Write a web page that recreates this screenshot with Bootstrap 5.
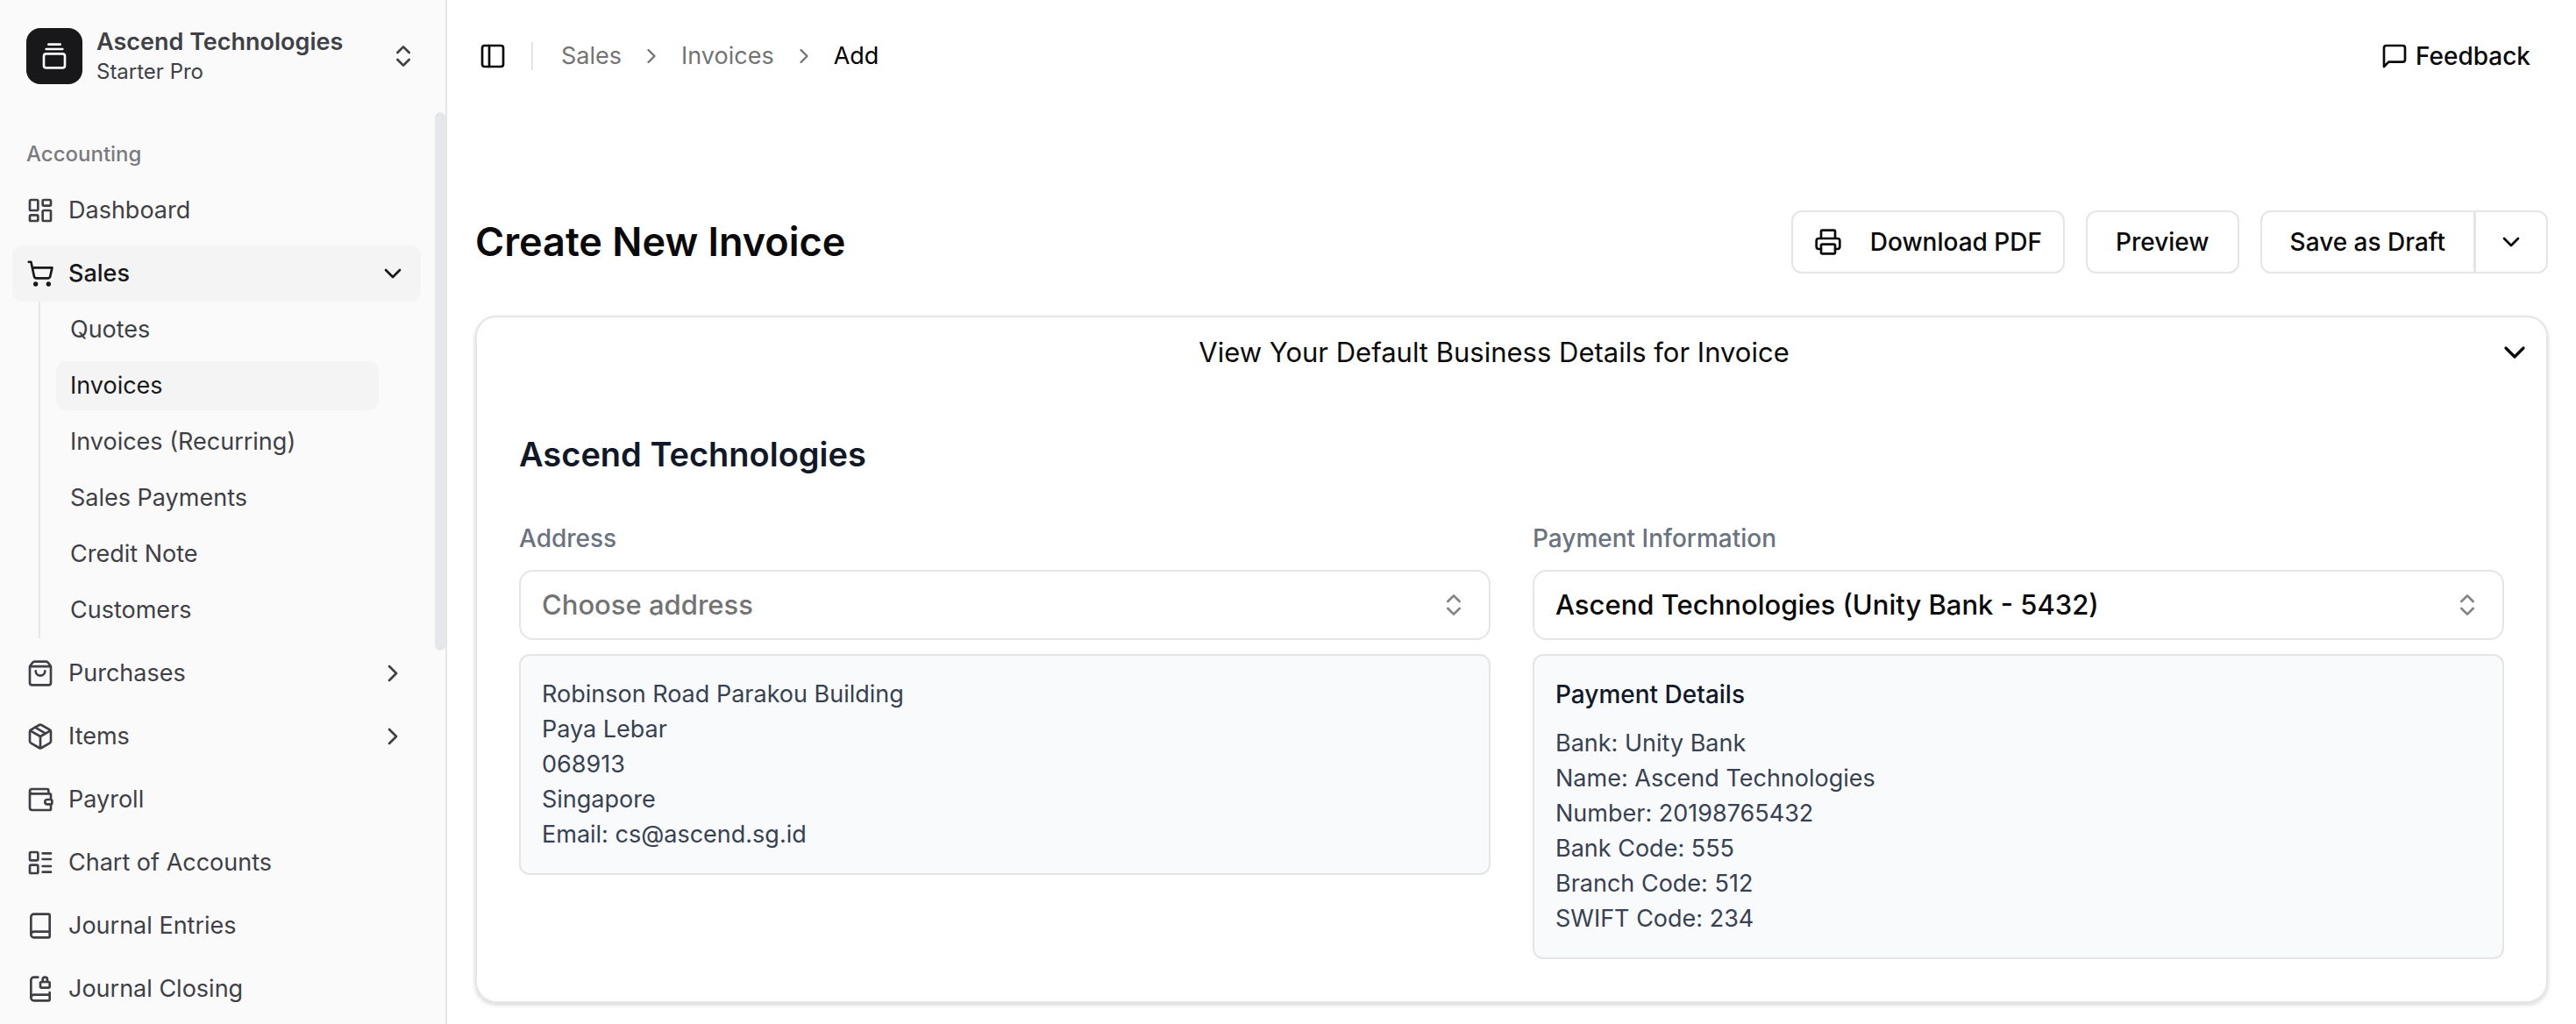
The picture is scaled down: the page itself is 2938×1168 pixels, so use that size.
<!DOCTYPE html>
<html lang="en">
<head>
<meta charset="utf-8">
<meta name="viewport" content="width=device-width, initial-scale=1">
<title>Create New Invoice</title>
<link href="https://cdn.jsdelivr.net/npm/bootstrap@5.3.0/dist/css/bootstrap.min.css" rel="stylesheet">
<style>
  :root { --line: #e5e5e5; --ink: #0a0a0a; --muted: #737373; --side-ink: #3f3f46; }
  body { font-family: Inter, "Liberation Sans", sans-serif; font-size: 27px; line-height: 40px; color: var(--ink); background: #fff; }
  a { color: inherit; text-decoration: none; }
  .ico { width: 32px; height: 32px; flex: none; fill: none; stroke: currentColor; stroke-width: 2; stroke-linecap: round; stroke-linejoin: round; }
  .ico-sm { width: 28px; height: 28px; }
  .ico-lg { width: 40px; height: 40px; }
  .gap-16 { gap: 16px; }

  .side { width: 510px; flex: none; background: #fafafa; color: var(--side-ink); border-right: 2px solid #e5e5e8; overflow: hidden; }
  .brand { height: 128px; flex: none; padding: 0 32px 0 30px; border: 0; background: none; color: inherit; text-align: left; }
  .brand-logo { width: 64px; height: 64px; border-radius: 16px; background: #18181b; color: #fafafa; }
  .brand-name { line-height: 36px; }
  .brand-plan { font-size: 24px; line-height: 32px; }
  .side-menu { padding: 16px 16px 0 14px; min-width: 0; overflow: hidden; }
  .side-label { height: 64px; padding: 0 16px; font-size: 24px; line-height: 32px; color: #7a7a80; }
  .side-list { gap: 8px; }
  .side-link { height: 64px; padding: 0 16px; border-radius: 12px; }
  .side-link.active, .sub-link.active { background: #f4f4f4; color: #18181b; }
  .sub-list { margin: 0 32px 0 30px; padding: 4px 16px 4px 18px; border-left: 2px solid #e5e7eb; gap: 8px; }
  .sub-link { height: 56px; padding: 0 16px; border-radius: 12px; }
  .side-track { width: 12px; flex: none; }
  .side-thumb { height: 59%; border-radius: 6px; background: #e5e7eb; }

  .topbar { height: 128px; padding: 0 52px 0 36px; }
  .plain-btn { border: 0; padding: 0; background: none; color: inherit; }
  .feedback { font-size: 28px; }
  .top-rule { width: 2px; height: 32px; margin: 0 32px 0 28px; background: var(--line); }
  .crumbs { gap: 20px; color: var(--muted); }
  .page { padding: 112px 32px 24px; }
  .page-title { font-size: 45px; line-height: 64px; }
  .btn-line { --bs-btn-color: var(--ink); --bs-btn-border-color: var(--line); --bs-btn-bg: #fff; --bs-btn-hover-bg: #f5f5f5; --bs-btn-hover-border-color: var(--line);
    height: 72px; border-width: 2px; border-radius: 12px; font-size: 28px; line-height: 40px; font-weight: 500; padding: 0 32px; }
  .btn-icon { padding: 0 24px; }
  .btn-print { gap: 32px; }
  .btn-group > .btn-line.btn-icon { margin-left: 0; }
  .panel { margin-top: 48px; border: 2px solid var(--line); border-radius: 24px; box-shadow: 0 2px 4px rgba(0,0,0,.1), 0 2px 6px rgba(0,0,0,.08); }
  .panel-toggle { padding: 16px; font-size: 31px; line-height: 48px; }
  .panel-main { padding: 48px; }
  .company { font-size: 38px; line-height: 56px; margin-bottom: 48px; color: #111827; }
  .cols { --bs-gutter-x: 48px; }
  .field-label { font-size: 28px; color: #6b7280; margin-bottom: 16px; }
  .field { height: 80px; border: 2px solid var(--line); border-radius: 16px; padding: 0 72px 0 24px; font-size: 31px; line-height: 48px; font-weight: 500; color: var(--ink); background: #fff; appearance: none; }
  .field.unset { color: var(--muted); }
  .field-mark { right: 26px; color: #848484; pointer-events: none; }
  .detail { margin-top: 16px; border: 2px solid var(--line); border-radius: 12px; padding: 24px; background: #f9fafc; color: #374151; }
  .detail-title { font-size: 28px; line-height: 40px; margin-bottom: 16px; color: #111827; }
</style>
</head>
<body>
<div class="d-flex vh-100 overflow-hidden">
  <aside class="side d-flex flex-column">
    <button type="button" class="brand d-flex align-items-center gap-16">
      <span class="brand-logo d-flex align-items-center justify-content-center">
        <svg class="ico" viewBox="0 0 24 24"><path d="M7 2h10M5 6h14"/><rect width="18" height="12" x="3" y="10" rx="2"/></svg>
      </span>
      <span class="flex-grow-1 d-flex flex-column">
        <span class="brand-name fw-semibold">Ascend Technologies</span>
        <span class="brand-plan">Starter Pro</span>
      </span>
      <svg class="ico" viewBox="0 0 24 24"><path d="m7 15 5 5 5-5M7 9l5-5 5 5"/></svg>
    </button>
    <div class="d-flex flex-grow-1 overflow-hidden">
      <nav class="side-menu flex-grow-1" aria-label="Accounting">
        <div class="side-label d-flex align-items-center fw-medium">Accounting</div>
        <ul class="side-list list-unstyled d-flex flex-column mb-0">
          <li><a href="#" class="side-link d-flex align-items-center gap-16"><svg class="ico" viewBox="0 0 24 24"><rect width="7" height="9" x="3" y="3" rx="1"/><rect width="7" height="5" x="14" y="3" rx="1"/><rect width="7" height="9" x="14" y="12" rx="1"/><rect width="7" height="5" x="3" y="16" rx="1"/></svg>Dashboard</a></li>
          <li>
            <a href="#" class="side-link active d-flex align-items-center gap-16 fw-medium"><svg class="ico" viewBox="0 0 24 24"><circle cx="8" cy="21" r="1"/><circle cx="19" cy="21" r="1"/><path d="M2.05 2.05h2l2.66 12.42a2 2 0 0 0 2 1.58h9.78a2 2 0 0 0 1.95-1.57l1.65-7.43H5.12"/></svg><span class="flex-grow-1">Sales</span><svg class="ico" viewBox="0 0 24 24"><path d="m6 9 6 6 6-6"/></svg></a>
            <ul class="sub-list list-unstyled d-flex flex-column">
              <li><a href="#" class="sub-link d-flex align-items-center">Quotes</a></li>
              <li><a href="#" class="sub-link active d-flex align-items-center">Invoices</a></li>
              <li><a href="#" class="sub-link d-flex align-items-center">Invoices (Recurring)</a></li>
              <li><a href="#" class="sub-link d-flex align-items-center">Sales Payments</a></li>
              <li><a href="#" class="sub-link d-flex align-items-center">Credit Note</a></li>
              <li><a href="#" class="sub-link d-flex align-items-center">Customers</a></li>
            </ul>
          </li>
          <li><a href="#" class="side-link d-flex align-items-center gap-16"><svg class="ico" viewBox="0 0 24 24"><path d="M16 10a4 4 0 0 1-8 0M3.103 6.034h17.794"/><path d="M3.4 5.467a2 2 0 0 0-.4 1.2V20a2 2 0 0 0 2 2h14a2 2 0 0 0 2-2V6.667a2 2 0 0 0-.4-1.2l-2-2.667A2 2 0 0 0 17 2H7a2 2 0 0 0-1.6.8z"/></svg><span class="flex-grow-1">Purchases</span><svg class="ico" viewBox="0 0 24 24"><path d="m9 18 6-6-6-6"/></svg></a></li>
          <li><a href="#" class="side-link d-flex align-items-center gap-16"><svg class="ico" viewBox="0 0 24 24"><path d="M11 21.73a2 2 0 0 0 2 0l7-4A2 2 0 0 0 21 16V8a2 2 0 0 0-1-1.73l-7-4a2 2 0 0 0-2 0l-7 4A2 2 0 0 0 3 8v8a2 2 0 0 0 1 1.73zM12 22V12"/><path d="m3.3 7 8.7 5 8.7-5M7.5 4.27l9 5.15"/></svg><span class="flex-grow-1">Items</span><svg class="ico" viewBox="0 0 24 24"><path d="m9 18 6-6-6-6"/></svg></a></li>
          <li><a href="#" class="side-link d-flex align-items-center gap-16"><svg class="ico" viewBox="0 0 24 24"><path d="M19 7V4a1 1 0 0 0-1-1H5a2 2 0 0 0 0 4h15a1 1 0 0 1 1 1v4h-3a2 2 0 0 0 0 4h3a1 1 0 0 0 1-1v-2a1 1 0 0 0-1-1M3 5v14a2 2 0 0 0 2 2h15a1 1 0 0 0 1-1v-4"/></svg>Payroll</a></li>
          <li><a href="#" class="side-link d-flex align-items-center gap-16"><svg class="ico" viewBox="0 0 24 24"><rect width="7" height="7" x="3" y="3" rx="1"/><rect width="7" height="7" x="3" y="14" rx="1"/><path d="M14 4h7M14 9h7M14 15h7M14 20h7"/></svg>Chart of Accounts</a></li>
          <li><a href="#" class="side-link d-flex align-items-center gap-16"><svg class="ico" viewBox="0 0 24 24"><path d="M4 19.5v-15A2.5 2.5 0 0 1 6.5 2H19a1 1 0 0 1 1 1v18a1 1 0 0 1-1 1H6.5a1 1 0 0 1 0-5H20"/></svg>Journal Entries</a></li>
          <li><a href="#" class="side-link d-flex align-items-center gap-16"><svg class="ico" viewBox="0 0 24 24"><path d="M18 6V4a2 2 0 1 0-4 0v2M20 15v6a1 1 0 0 1-1 1H6.5a1 1 0 0 1 0-5H20M4 19.5v-15A2.5 2.5 0 0 1 6.5 2H10"/><rect x="12" y="6" width="8" height="5" rx="1"/></svg>Journal Closing</a></li>
        </ul>
      </nav>
      <div class="side-track"><div class="side-thumb"></div></div>
    </div>
  </aside>

  <main class="flex-grow-1 overflow-hidden">
    <header class="topbar d-flex align-items-center">
      <button type="button" class="plain-btn d-flex" aria-label="Toggle sidebar"><svg class="ico" viewBox="0 0 24 24"><rect width="18" height="18" x="3" y="3" rx="2"/><path d="M9 3v18"/></svg></button>
      <div class="top-rule"></div>
      <nav class="flex-grow-1" aria-label="Breadcrumb">
        <ol class="crumbs list-unstyled d-flex align-items-center mb-0">
          <li><a href="#">Sales</a></li>
          <li class="d-flex" aria-hidden="true"><svg class="ico ico-sm" viewBox="0 0 24 24"><path d="m9 18 6-6-6-6"/></svg></li>
          <li><a href="#">Invoices</a></li>
          <li class="d-flex" aria-hidden="true"><svg class="ico ico-sm" viewBox="0 0 24 24"><path d="m9 18 6-6-6-6"/></svg></li>
          <li class="text-black" aria-current="page">Add</li>
        </ol>
      </nav>
      <button type="button" class="plain-btn feedback d-flex align-items-center gap-2 fw-medium"><svg class="ico" viewBox="0 0 24 24"><path d="M21 15a2 2 0 0 1-2 2H7l-4 4V5a2 2 0 0 1 2-2h14a2 2 0 0 1 2 2z"/></svg>Feedback</button>
    </header>

    <div class="page">
      <div class="d-flex align-items-center justify-content-between">
        <h1 class="page-title fw-semibold mb-0">Create New Invoice</h1>
        <div class="d-flex gap-4">
          <button type="button" class="btn btn-line btn-icon btn-print d-flex align-items-center"><svg class="ico" viewBox="0 0 24 24"><path d="M6 18H4a2 2 0 0 1-2-2v-5a2 2 0 0 1 2-2h16a2 2 0 0 1 2 2v5a2 2 0 0 1-2 2h-2M6 9V3a1 1 0 0 1 1-1h10a1 1 0 0 1 1 1v6"/><rect x="6" y="14" width="12" height="8" rx="1"/></svg>Download PDF</button>
          <button type="button" class="btn btn-line">Preview</button>
          <div class="btn-group">
            <button type="button" class="btn btn-line">Save as Draft</button>
            <button type="button" class="btn btn-line btn-icon d-flex align-items-center" aria-label="More save options"><svg class="ico" viewBox="0 0 24 24"><path d="m6 9 6 6 6-6"/></svg></button>
          </div>
        </div>
      </div>

      <section class="panel">
        <button type="button" class="plain-btn panel-toggle w-100 d-flex align-items-center" aria-expanded="true"><span class="flex-grow-1">View Your Default Business Details for Invoice</span><svg class="ico ico-lg" viewBox="0 0 24 24"><path d="m6 9 6 6 6-6"/></svg></button>
        <div class="panel-main">
          <h2 class="company fw-semibold">Ascend Technologies</h2>
          <div class="row cols">
            <div class="col-6">
              <label class="field-label d-block fw-medium" for="address">Address</label>
              <div class="position-relative d-flex align-items-center">
                <select class="field unset w-100" id="address"><option>Choose address</option></select>
                <svg class="ico field-mark position-absolute" viewBox="0 0 24 24"><path d="m7 15 5 5 5-5M7 9l5-5 5 5"/></svg>
              </div>
              <div class="detail">
                <div>Robinson Road Parakou Building</div>
                <div>Paya Lebar</div>
                <div>068913</div>
                <div>Singapore</div>
                <div>Email: cs@ascend.sg.id</div>
              </div>
            </div>
            <div class="col-6">
              <label class="field-label d-block fw-medium" for="payment">Payment Information</label>
              <div class="position-relative d-flex align-items-center">
                <select class="field w-100" id="payment"><option>Ascend Technologies (Unity Bank - 5432)</option></select>
                <svg class="ico field-mark position-absolute" viewBox="0 0 24 24"><path d="m7 15 5 5 5-5M7 9l5-5 5 5"/></svg>
              </div>
              <div class="detail">
                <h3 class="detail-title fw-medium">Payment Details</h3>
                <div>Bank: Unity Bank</div>
                <div>Name: Ascend Technologies</div>
                <div>Number: 20198765432</div>
                <div>Bank Code: 555</div>
                <div>Branch Code: 512</div>
                <div>SWIFT Code: 234</div>
              </div>
            </div>
          </div>
        </div>
      </section>
    </div>
  </main>
</div>
<script src="https://cdn.jsdelivr.net/npm/bootstrap@5.3.0/dist/js/bootstrap.bundle.min.js"></script>
</body>
</html>
